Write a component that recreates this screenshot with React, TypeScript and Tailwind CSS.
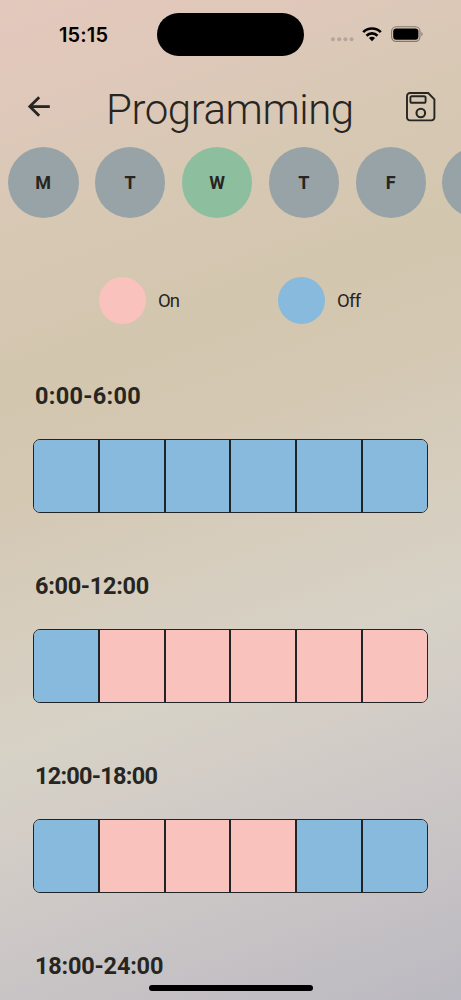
import { useState } from 'react'

interface TimeBlock {
  label: string
  slots: boolean[]
  labelClass: string
}

const DAYS = ['M', 'T', 'W', 'T', 'F', 'S', 'S']

const INITIAL_BLOCKS: TimeBlock[] = [
  { label: '0:00-6:00', slots: [false, false, false, false, false, false], labelClass: 'tracking-[0.3px]' },
  { label: '6:00-12:00', slots: [false, true, true, true, true, true], labelClass: 'tracking-[-0.3px]' },
  { label: '12:00-18:00', slots: [false, true, true, true, false, false], labelClass: 'tracking-[-0.75px]' },
  { label: '18:00-24:00', slots: [false, false, false, false, false, false], labelClass: 'tracking-[-0.2px]' },
]

function StatusBar() {
  return (
    <div className="flex h-[70px] shrink-0 items-start">
      <div className="w-[157px] pt-[23px] pl-[59px] font-['Inter',sans-serif] text-[20px] leading-6 font-semibold tracking-[0.15px] text-black">
        15:15
      </div>
      <div className="mt-[13px] h-[43px] w-[147px] rounded-full bg-black" />
      <div className="flex flex-1 items-center pt-[26px] pl-[27px]">
        <svg width="23" height="16" viewBox="0 0 23 16" fill="#b6a49a">
          <circle cx="2" cy="13.3" r="2" />
          <circle cx="8.2" cy="13.3" r="2" />
          <circle cx="14.4" cy="13.3" r="2" />
          <circle cx="20.6" cy="13.3" r="2" />
        </svg>
        <svg className="ml-[8px]" width="20" height="16" viewBox="0 0 20 16" fill="none" stroke="#000" strokeWidth="2.7">
          <path d="M1.2 6.1a12.6 12.6 0 0 1 17.6 0" />
          <path d="M4.5 9.7a7.8 7.8 0 0 1 11 0" />
          <path d="M10 15.2 6.9 12.1a4.4 4.4 0 0 1 6.2 0z" fill="#000" stroke="none" />
        </svg>
        <svg className="ml-[9px]" width="33" height="16" viewBox="0 0 33 16" fill="none">
          <rect x="0.6" y="0.8" width="28.4" height="14.6" rx="4.6" stroke="#85776e" strokeWidth="1.1" />
          <rect x="2.2" y="2.5" width="25.2" height="11.2" rx="3" fill="#000" />
          <path d="M30.4 6v4.2c1.6-.8 1.6-3.4 0-4.2z" fill="#85776e" />
        </svg>
      </div>
    </div>
  )
}

function Header() {
  return (
    <header className="flex h-[77px] shrink-0 items-start pr-[25px] pl-[27px]">
      <button aria-label="Back" className="mt-[25px]">
        <svg width="24" height="22" viewBox="0 0 24 22" fill="none" stroke="#272521" strokeWidth="2.8">
          <path d="M22.8 11.6H3" />
          <path d="M12.2 2.2 2.8 11.6l9.4 9.2" />
        </svg>
      </button>
      <h1 className="mt-[15px] ml-[55px] text-[42px] leading-[50px] font-[350] tracking-[-0.45px] whitespace-nowrap">
        Programming
      </h1>
      <button aria-label="Save" className="mt-[22px] ml-auto">
        <svg width="30" height="30" viewBox="0 0 30 30" fill="none" stroke="#272521" strokeWidth="1.9">
          <path d="M4 1h18.2L28.4 7.4V25.4a3 3 0 0 1-3 3H4a3 3 0 0 1-3-3V4a3 3 0 0 1 3-3z" />
          <rect x="4.4" y="4.2" width="15.2" height="6.6" rx="1.6" />
          <circle cx="14.8" cy="21" r="4.3" strokeWidth="2.1" />
        </svg>
      </button>
    </header>
  )
}

export default function App() {
  const [selectedDay, setSelectedDay] = useState(2)
  const [blocks, setBlocks] = useState(INITIAL_BLOCKS)

  const toggleSlot = (blockIndex: number, slotIndex: number) => {
    setBlocks(
      blocks.map((block, i) =>
        i === blockIndex ? { ...block, slots: block.slots.map((on, j) => (j === slotIndex ? !on : on)) } : block
      )
    )
  }

  return (
    <div className="relative flex h-[1000px] w-[461px] flex-col overflow-hidden bg-[linear-gradient(160deg,#e4c8bd_0%,#dfc8ba_10%,#d7c8b4_21%,#d3c6ae_33%,#d4c8b3_43%,#d6cdbd_54%,#d7d2c6_65%,#d1cbc7_76%,#c8c4c5_86%,#bbb9c1_100%)] font-['Roboto',sans-serif] text-[#272521]">
      <StatusBar />
      <Header />

      {/* Days */}
      <div className="flex shrink-0 gap-[16.4px] overflow-hidden pl-[8px]">
        {DAYS.map((day, i) => (
          <button
            key={i}
            onClick={() => setSelectedDay(i)}
            className={`h-[70.5px] w-[70.5px] shrink-0 rounded-full text-[18px] font-bold ${
              i === selectedDay ? 'bg-[#8dbf9f]' : 'bg-[#98a3a7]'
            }`}
          >
            {day}
          </button>
        ))}
      </div>

      {/* Legend */}
      <div className="mt-[59px] flex h-[48px] shrink-0 items-center pl-[99px]">
        <div className="flex w-[179px] items-center gap-[12px]">
          <span className="h-[47px] w-[47px] rounded-full bg-[#fac2bc]" />
          <span className="pt-[2px] text-[18.5px] tracking-[-1px]">On</span>
        </div>
        <div className="flex items-center gap-[12px]">
          <span className="h-[47px] w-[47px] rounded-full bg-[#87badd]" />
          <span className="pt-[2px] text-[18.5px] tracking-[-0.7px]">Off</span>
        </div>
      </div>

      {/* Schedule */}
      <div className="flex flex-col pt-[56px]">
        {blocks.map((block, i) => (
          <section key={block.label} className="h-[190px] shrink-0 px-[33px]">
            <h2 className={`pl-[2px] text-[23.5px] leading-[30px] font-bold ${block.labelClass}`}>{block.label}</h2>
            <div className="mt-[28px] flex h-[74px] overflow-hidden rounded-[7px] border border-[#202426]">
              {block.slots.map((on, j) => (
                <button
                  key={j}
                  onClick={() => toggleSlot(i, j)}
                  className={`flex-1 border-[#202426] not-last:border-r-2 ${on ? 'bg-[#fac2bc]' : 'bg-[#87badd]'}`}
                />
              ))}
            </div>
          </section>
        ))}
      </div>

      {/* Home indicator */}
      <div className="absolute bottom-[9px] left-[148.5px] h-[6px] w-[164px] rounded-full bg-black" />
    </div>
  )
}
